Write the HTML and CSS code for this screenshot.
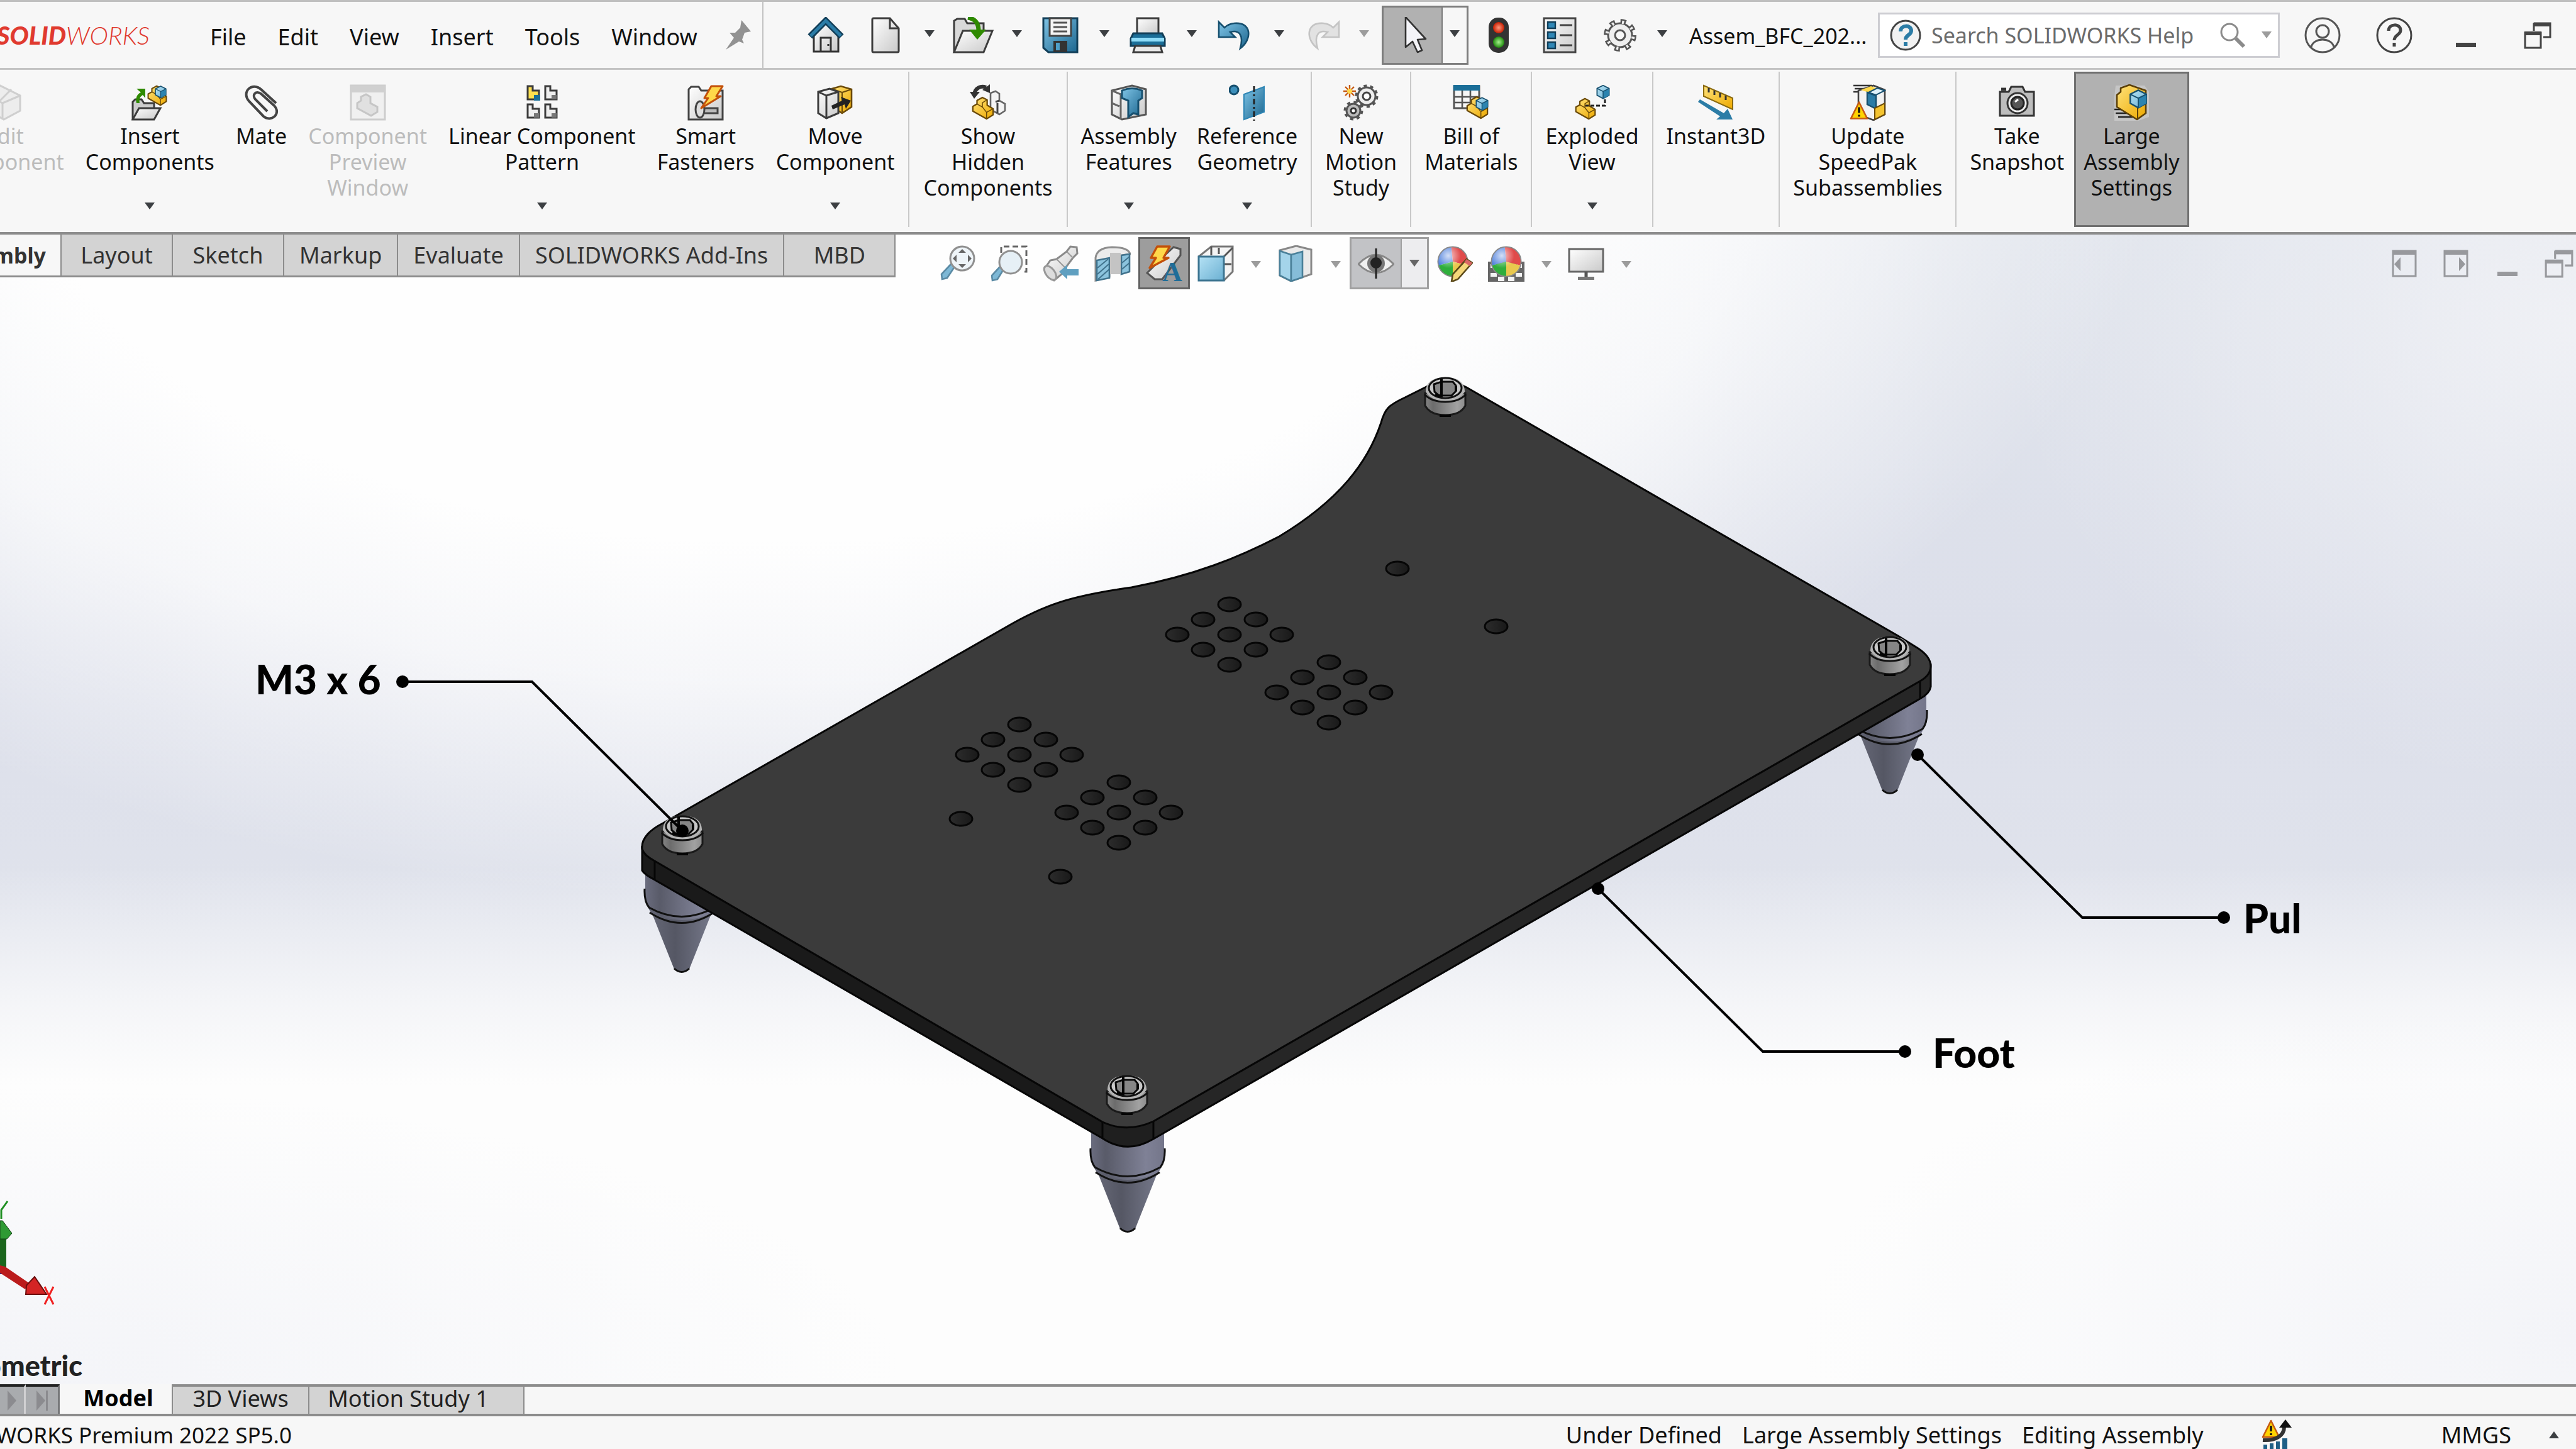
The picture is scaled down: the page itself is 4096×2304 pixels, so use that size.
FILE: index.html
```html
<!DOCTYPE html>
<html lang="en">
<head>
<meta charset="utf-8">
<title>SOLIDWORKS - Assembly</title>
<link rel="stylesheet" href="styles.css">
</head>
<body>
<svg class="defs" width="0" height="0" aria-hidden="true">
  <defs>
    <linearGradient id="gGray" x1="0" y1="0" x2="1" y2="1"><stop offset="0" stop-color="#ffffff"/><stop offset="1" stop-color="#c9c9c9"/></linearGradient>
    <linearGradient id="gBlue" x1="0" y1="0" x2="1" y2="1"><stop offset="0" stop-color="#7fc4e6"/><stop offset="1" stop-color="#1c668f"/></linearGradient>
    <linearGradient id="gSky" x1="0" y1="0" x2="1" y2="1"><stop offset="0" stop-color="#b5e2f5"/><stop offset="1" stop-color="#6bb0d2"/></linearGradient>
    <linearGradient id="gGold" x1="0" y1="0" x2="1" y2="1"><stop offset="0" stop-color="#ffe27a"/><stop offset="1" stop-color="#eda900"/></linearGradient>
    <linearGradient id="gFoot" x1="0" x2="1"><stop offset="0" stop-color="#6a6c7e"/><stop offset=".2" stop-color="#595b69"/><stop offset=".75" stop-color="#7f8196"/><stop offset="1" stop-color="#74768a"/></linearGradient>
    <linearGradient id="gCone" x1="0" x2="1"><stop offset="0" stop-color="#666877"/><stop offset=".4" stop-color="#555764"/><stop offset="1" stop-color="#777a8c"/></linearGradient>
    <linearGradient id="gScrew" x1="0" x2="1"><stop offset="0" stop-color="#858585"/><stop offset=".2" stop-color="#6c6c6c"/><stop offset=".8" stop-color="#a2a2a2"/><stop offset="1" stop-color="#8a8a8a"/></linearGradient>
    <linearGradient id="gHole" x1="0" x2="1"><stop offset="0" stop-color="#2c2c2c"/><stop offset="1" stop-color="#191919"/></linearGradient>
    <radialGradient id="gRed" cx=".5" cy=".5" r=".5"><stop offset="0" stop-color="#ff9a80"/><stop offset="1" stop-color="#c81e00"/></radialGradient>
    <radialGradient id="gGreen" cx=".5" cy=".5" r=".5"><stop offset="0" stop-color="#a6f08e"/><stop offset="1" stop-color="#1f8a0c"/></radialGradient>
    <radialGradient id="gShine" cx=".35" cy=".3" r=".7"><stop offset="0" stop-color="#fff" stop-opacity=".75"/><stop offset=".6" stop-color="#fff" stop-opacity="0"/></radialGradient>
    <symbol id="part" viewBox="0 0 40 40">
      <path d="M3 17 10 13V7L19 2 27 6V15L37 21V31L26 38 3 25Z" fill="url(#gGold)" stroke="#6b4a08" stroke-width="2.4" stroke-linejoin="round"/>
      <path d="M10 13 19 18V11L27 6M19 18 26 27V38M26 27 37 21" fill="none" stroke="#6b4a08" stroke-width="1.6"/>
    </symbol>
    <symbol id="cube" viewBox="0 0 40 40">
      <path d="M4 11 20 3 36 11V29L20 38 4 29Z" fill="url(#gSky)" stroke="#17506f" stroke-width="3" stroke-linejoin="round"/>
      <path d="M20 19 36 11V29L20 38Z" fill="#2c84b0"/>
      <path d="M4 11 20 19 36 11M20 19V38" fill="none" stroke="#17506f" stroke-width="2.4"/>
    </symbol>
    <symbol id="ball" viewBox="0 0 44 44">
      <path d="M22 22 20 2A20 20 0 0 0 3 27Z" fill="#4f80dc"/>
      <path d="M22 22 20 2A20 20 0 0 1 41 27Z" fill="#e04a4a"/>
      <path d="M22 22 3 27A20 20 0 0 0 22 42Z" fill="#2fae3c"/>
      <path d="M22 22 41 27A20 20 0 0 1 22 42Z" fill="#e9c84e"/>
      <circle cx="22" cy="22" r="20" fill="url(#gShine)" stroke="#888" stroke-width="1.5"/>
    </symbol>
    <symbol id="restore" viewBox="0 0 46 46">
      <path d="M17 4H43V26H32M17 4V16" fill="none" stroke="currentColor" stroke-width="3"/><path d="M16 3H44V9H16Z" fill="currentColor"/>
      <path d="M3 19H28V43H3Z" fill="none" stroke="currentColor" stroke-width="3"/><path d="M2 17H29V23H2Z" fill="currentColor"/>
    </symbol>
    <symbol id="warn" viewBox="0 0 30 30">
      <path d="M15 2 28 28H2Z" fill="#ffd400" stroke="#c65a12" stroke-width="2.6" stroke-linejoin="round"/><path d="M15 10V19M15 22V25" stroke="#111" stroke-width="3.4"/>
    </symbol>
  </defs>
</svg>

<div class="app">
  <header class="titlebar">
    <div class="brand"><span><b>SOLID</b>WORKS</span></div>
    <nav class="menus">
      <button>File</button><button>Edit</button><button>View</button><button>Insert</button><button>Tools</button><button>Window</button>
      <button class="pin" aria-label="Keep menu visible"><svg width="42" height="48" viewBox="0 0 42 48"><path d="M26 0 41 18 31 20 27 31 30 37 22 34 1 47 14 28 7 20 16 20 24 12Z" fill="#929292"/></svg></button>
    </nav>
    <div class="quick">
      <button class="q home" aria-label="Home"><svg class="i" viewBox="0 0 58 58"><path d="M10 30 29 10 49 30V55H10Z" fill="url(#gGray)" stroke="#333" stroke-width="3"/><path d="M21 55V33H37V55M33 43V46" fill="none" stroke="#333" stroke-width="3"/><path d="M4 31 29 6 54 31" fill="none" stroke="#123f59" stroke-width="10"/><path d="M5 30 29 6 53 30" fill="none" stroke="#2b7ca6" stroke-width="5"/></svg></button>
      <button class="q" aria-label="New"><svg class="i" viewBox="0 0 58 58"><path d="M8 4Q8 2 10 2H36L50 18V54Q50 56 48 56H10Q8 56 8 54Z" fill="url(#gGray)" stroke="#3c3c3c" stroke-width="3"/><path d="M36 2V18H50" fill="none" stroke="#3c3c3c" stroke-width="3"/></svg></button><button class="c" aria-label="New options"><i></i></button>
      <button class="q" aria-label="Open"><svg class="i wide" viewBox="0 0 66 58"><path d="M3 56V6L8 3H20L24 10H50V22" fill="#d9d9d9" stroke="#3c3c3c" stroke-width="3"/><path d="M3 56 17 22H64L50 56Z" fill="url(#gGray)" stroke="#3c3c3c" stroke-width="3"/><path d="M25 1C37 3 42 10 42 22" fill="none" stroke="#2f8a00" stroke-width="7"/><path d="M27 20H54L40 36Z" fill="#2f8a00"/></svg></button><button class="c" aria-label="Open options"><i></i></button>
      <button class="q" aria-label="Save"><svg class="i" viewBox="0 0 58 58"><path d="M2 2H56V56H10L2 49Z" fill="url(#gBlue)" stroke="#123f59" stroke-width="3"/><path d="M12 2H46V30H12Z" fill="#f4f4f4" stroke="#444" stroke-width="3"/><path d="M18 9H40M18 16H40M18 23H40" stroke="#555" stroke-width="3"/><path d="M18 38H40V56H18Z" fill="#333"/><path d="M22 41H28V53H22Z" fill="#4e9fc9"/></svg></button><button class="c" aria-label="Save options"><i></i></button>
      <button class="q" aria-label="Print"><svg class="i" viewBox="0 0 58 58"><path d="M12 2H46V28H12Z" fill="url(#gGray)" stroke="#3c3c3c" stroke-width="3"/><path d="M6 26H52L56 34V46H2V34Z" fill="#1a6e98" stroke="#123f59" stroke-width="3"/><path d="M3 33H55V39H3Z" fill="#8fdcf8"/><path d="M9 46H49L52 56H6Z" fill="#e8e8e8" stroke="#3c3c3c" stroke-width="3"/></svg></button><button class="c" aria-label="Print options"><i></i></button>
      <button class="q" aria-label="Undo"><svg class="i" viewBox="0 0 58 58"><path d="M3 8V32H29L21 24C35 20 43 28 37 50C56 36 56 8 28 10Q18 11 12 17Z" fill="url(#gBlue)" stroke="#17506f" stroke-width="2.6"/></svg></button><button class="c" aria-label="Undo options"><i></i></button>
      <button class="q" aria-label="Redo" disabled><svg class="i" viewBox="0 0 58 58"><path d="M55 8V32H29L37 24C23 20 15 28 21 50C2 36 2 8 30 10Q40 11 46 17Z" fill="#e2e2e2" stroke="#c4c4c4" stroke-width="2.6"/></svg></button><button class="c redo pale" aria-label="Redo options" disabled><i></i></button>
      <div class="split">
        <button class="sel" aria-label="Select"><svg class="i" viewBox="0 0 58 58"><path d="M18 0V48L29 39 37 56 44 53 37 36 50 35Z" fill="#f4f4f8" stroke="#333" stroke-width="2.6" stroke-linejoin="round"/></svg></button><button class="selc" aria-label="Select options"><i></i></button>
      </div>
      <button class="q light" aria-label="Rebuild"><svg class="i" viewBox="0 0 58 58"><rect x="13" y="1" width="32" height="56" rx="15" fill="#333"/><circle cx="29" cy="17" r="9" fill="url(#gRed)"/><circle cx="29" cy="40" r="9" fill="url(#gGreen)"/></svg></button>
      <button class="q list" aria-label="File properties"><svg class="i" viewBox="0 0 58 58"><path d="M4 2H54V56H4Z" fill="url(#gGray)" stroke="#444" stroke-width="3"/><path d="M10 8H22V18H10ZM10 24H22V34H10ZM10 40H22V50H10Z" fill="#2f86b5" stroke="#123f59" stroke-width="2.4"/><path d="M29 13H49M29 29H49M29 45H49" stroke="#444" stroke-width="3"/></svg></button>
      <button class="q gear" aria-label="Options"><svg class="i" viewBox="0 0 58 58"><circle cx="29" cy="29" r="21" fill="none" stroke="#555" stroke-width="10" stroke-dasharray="8.2 8.3"/><circle cx="29" cy="29" r="19" fill="#efefef" stroke="#555" stroke-width="3"/><circle cx="29" cy="29" r="21" fill="none" stroke="#efefef" stroke-width="5" stroke-dasharray="3.2 13.3" stroke-dashoffset="-2.5"/><circle cx="29" cy="29" r="8" fill="#f7f7f7" stroke="#555" stroke-width="3"/></svg></button><button class="c narrow" aria-label="Options list"><i></i></button>
    </div>
    <span class="doc">Assem_BFC_202...</span>
    <label class="search">
      <svg class="ihelp" viewBox="0 0 52 52"><circle cx="26" cy="26" r="23" fill="#f2f2f2" stroke="#444" stroke-width="3"/><path d="M18 20C18 9 35 9 35 19C35 26 26 25 26 33M26 37V43" fill="none" stroke="#2b7ca6" stroke-width="6"/></svg>
      <input type="search" placeholder="Search SOLIDWORKS Help" aria-label="Search SOLIDWORKS Help">
      <svg class="imag" viewBox="0 0 42 42"><circle cx="16" cy="16" r="13" fill="none" stroke="#8b8b8b" stroke-width="3"/><path d="M26 26 39 39" stroke="#8b8b8b" stroke-width="6"/></svg>
      <i class="car pale"></i>
    </label>
    <div class="wins">
      <button aria-label="Account"><svg class="i" viewBox="0 0 58 58"><circle cx="29" cy="29" r="27" fill="none" stroke="#555" stroke-width="3"/><circle cx="29" cy="23" r="10" fill="none" stroke="#555" stroke-width="3"/><path d="M11 48C14 32 44 32 47 48" fill="none" stroke="#555" stroke-width="3"/></svg></button>
      <button aria-label="Help"><svg class="i" viewBox="0 0 58 58"><circle cx="29" cy="29" r="27" fill="none" stroke="#444" stroke-width="3"/><path d="M20 22C20 10 39 10 39 21C39 29 29 28 29 37M29 41V47" fill="none" stroke="#444" stroke-width="5"/></svg></button>
      <button aria-label="Minimize"><svg class="i" viewBox="0 0 58 58"><path d="M13 41H45V48H13Z" fill="#444"/></svg></button>
      <button class="dark" aria-label="Restore"><svg width="46" height="46"><use href="#restore"/></svg></button>
    </div>
  </header>

  <section class="ribbon">
    <button class="r first" disabled><svg class="i" viewBox="0 0 58 58"><path d="M0 16 22 2 54 18V42L28 56 0 40Z" fill="#ededed" stroke="#cfcfcf" stroke-width="3"/><path d="M0 16 26 30 54 18M26 30V54M8 40 40 8" fill="none" stroke="#cfcfcf" stroke-width="3"/></svg><span>Edit<br>Component</span></button>
    <button class="r"><svg class="i" viewBox="0 0 58 58"><path d="M2 56V28L6 24H16L20 30H36V38" fill="#ccc" stroke="#3c3c3c" stroke-width="3"/><path d="M2 56 12 38H46L36 56Z" fill="url(#gGray)" stroke="#3c3c3c" stroke-width="3"/><path d="M8 30C6 22 9 15 15 13L8 7H22V22L18 17C13 20 12 24 13 30Z" fill="#2f8a00"/><use href="#part" x="24" y="0" width="34" height="36"/><use href="#cube" x="36" y="1" width="21" height="22"/></svg><span>Insert<br>Components</span><i class="car"></i></button>
    <button class="r"><svg class="i" viewBox="0 0 58 58"><path d="M52 30 29 9C14-5-4 12 9 27L32 51C44 61 61 47 49 34L28 15C20 9 13 17 19 24L38 43" fill="none" stroke="#444" stroke-width="4"/></svg><span>Mate</span></button>
    <button class="r" disabled><svg class="i" viewBox="0 0 58 58"><path d="M2 2H56V56H2Z" fill="#f0f0f0" stroke="#cdcdcd" stroke-width="3"/><path d="M2 2H56V13H2Z" fill="#d0d0d0"/><path d="M12 30 18 26V20L26 16 33 20V30L44 36V44L34 50 12 38Z" fill="#e0e0e0" stroke="#c6c6c6" stroke-width="3"/></svg><span>Component<br>Preview<br>Window</span></button>
    <button class="r"><svg class="i" viewBox="0 0 58 58"><g fill="#eee" stroke="#3c3c3c" stroke-width="3"><path d="M6 3H14V10H24V24H6Z" fill="#ffdf4f"/><path d="M34 3H42V10H52V24H34ZM6 32H14V39H24V53H6ZM34 32H42V39H52V53H34Z"/></g><path d="M16 17H26V26H16Z" fill="#1a6e98"/><path d="M44 17H52V24H44ZM16 46H24V53H16ZM44 46H52V53H44Z" fill="#777"/></svg><span>Linear Component<br>Pattern</span><i class="car"></i></button>
    <button class="r"><svg class="i" viewBox="0 0 58 58"><path d="M2 8 6 4H18L22 10H56V56H2Z" fill="url(#gGray)" stroke="#444" stroke-width="3"/><path d="M20 38H48V46H20Z" fill="#bbb" stroke="#444" stroke-width="3"/><ellipse cx="20" cy="40" rx="7" ry="13" fill="#ddd" stroke="#444" stroke-width="3"/><path d="M38 3H56L46 19H53L22 38 33 22H27Z" fill="#ffd84a" stroke="#c3500a" stroke-width="3" stroke-linejoin="round"/></svg><span>Smart<br>Fasteners</span></button>
    <button class="r"><svg class="i" viewBox="0 0 58 58"><path d="M24 7 38 3 55 8V36L40 46 24 36Z" fill="url(#gGold)" stroke="#6b4a08" stroke-width="2.6"/><path d="M26 8 40 13V44M40 13 55 8" fill="none" stroke="#6b4a08" stroke-width="2"/><path d="M2 12 20 7 34 12V46L15 54 2 46Z" fill="url(#gGray)" stroke="#3c3c3c" stroke-width="3"/><path d="M2 12 15 18 34 12M15 18V54" fill="none" stroke="#3c3c3c" stroke-width="3"/><path d="M23 34 40 26 38 20 54 26 46 39 44 32 25 40Z" fill="#222"/></svg><span>Move<br>Component</span><i class="car"></i></button>
    <hr>
    <button class="r"><svg class="i" viewBox="0 0 58 58"><path d="M33 14 41 11 47 15V26L56 31V42L47 48 33 40Z" fill="#f4f4f4" stroke="#666" stroke-width="2.6"/><path d="M41 28 47 26M44 30V46" stroke="#444" stroke-width="3"/><use href="#part" x="2" y="18" width="38" height="40"/><path d="M7 16C9 5 18 2 26 5" fill="none" stroke="#333" stroke-width="6"/><path d="M32 0V14L20 9ZM0 12H16L7 23Z" fill="#333"/></svg><span>Show<br>Hidden<br>Components</span></button>
    <hr>
    <button class="r tight"><svg class="i" viewBox="0 0 58 58"><path d="M2 10 34 2 56 8V48L18 56 2 48Z" fill="url(#gGray)" stroke="#555" stroke-width="3"/><path d="M2 10 16 16 34 12M16 16V56M2 30 14 35" fill="none" stroke="#666" stroke-width="3"/><path d="M18 10Q34 3 50 10V22L44 26V48L36 46 28 52V26L18 22Z" fill="url(#gBlue)" stroke="#17506f" stroke-width="3"/></svg><span>Assembly<br>Features</span><i class="car"></i></button>
    <button class="r tight"><svg class="i" viewBox="0 0 58 58"><circle cx="8" cy="9" r="7" fill="#3c8fbb" stroke="#17506f" stroke-width="3"/><path d="M24 16 56 4V44L24 56Z" fill="url(#gBlue)" stroke="#2f86b5" stroke-width="2"/><path d="M40 3V58" stroke="#222" stroke-width="3" stroke-dasharray="9 4 3 4"/></svg><span>Reference<br>Geometry</span><i class="car"></i></button>
    <hr>
    <button class="r tight"><svg class="i" viewBox="0 0 58 58"><circle cx="38" cy="19" r="16" fill="none" stroke="#555" stroke-width="5" stroke-dasharray="5 5.05"/><circle cx="38" cy="19" r="14" fill="#eee" stroke="#555" stroke-width="3"/><circle cx="38" cy="19" r="6" fill="#fff" stroke="#444" stroke-width="3"/><circle cx="17" cy="42" r="13" fill="none" stroke="#555" stroke-width="5" stroke-dasharray="5 5.2"/><circle cx="17" cy="42" r="11" fill="#bbb" stroke="#555" stroke-width="3"/><circle cx="17" cy="42" r="4" fill="#fff" stroke="#333" stroke-width="3"/><path d="M11 1V21M1 11H21M4 4 18 18M18 4 4 18" stroke="#c65a12" stroke-width="2.4"/><circle cx="11" cy="11" r="4" fill="#ffd84a"/></svg><span>New<br>Motion<br>Study</span></button>
    <hr>
    <button class="r tight"><svg class="i" viewBox="0 0 58 58"><path d="M2 3H42V38H2Z" fill="#f6f6f6" stroke="#555" stroke-width="3"/><path d="M15 10V38M28 10V38M2 20H42M2 29H42" stroke="#555" stroke-width="2.6"/><path d="M1 1H43V10H1Z" fill="#1a6e98"/><use href="#part" x="20" y="16" width="38" height="42"/><use href="#cube" x="35" y="18" width="23" height="26"/></svg><span>Bill of<br>Materials</span></button>
    <hr>
    <button class="r tight"><svg class="i" viewBox="0 0 58 58"><use href="#part" x="0" y="20" width="36" height="38"/><use href="#cube" x="34" y="0" width="24" height="24"/><path d="M49 24V34H18" fill="none" stroke="#222" stroke-width="3" stroke-dasharray="6 3"/></svg><span>Exploded<br>View</span><i class="car"></i></button>
    <hr>
    <button class="r tight"><svg class="i" viewBox="0 0 58 58"><path d="M10 2 56 22V40L10 19Z" fill="url(#gGold)" stroke="#8a6a10" stroke-width="2"/><path d="M18 6V13M27 10V17M36 14V21M45 18V25" stroke="#333" stroke-width="3"/><path d="M1 28 4 24 42 46 48 39 56 56H30L36 51Z" fill="#2b7ca6"/></svg><span>Instant3D</span></button>
    <hr>
    <button class="r tight"><svg class="i" viewBox="0 0 58 58"><path d="M6 2H36M8 7H28M6 12H24" stroke="#333" stroke-width="2.6"/><path d="M14 10 38 2 56 9V48L38 57 14 48Z" fill="#f2f2f2" stroke="#444" stroke-width="2.6"/><path d="M18 9 34 3 44 7 30 13Z" fill="#ffd84a"/><path d="M30 13 44 6 56 10 42 17Z" fill="#dff1fa" stroke="#17506f" stroke-width="2"/><path d="M28 13 42 18V39L28 32Z" fill="#2b7ca6" stroke="#17506f" stroke-width="2.4"/><path d="M40 38 56 30V48L40 56Z" fill="#f4c430" stroke="#6b4a08" stroke-width="2"/><use href="#warn" x="0" y="26" width="30" height="31"/></svg><span>Update<br>SpeedPak<br>Subassemblies</span></button>
    <hr>
    <button class="r tight"><svg class="i" viewBox="0 0 58 58"><path d="M2 12H16L20 4H38L42 12H56V50H2Z" fill="#bdbdbd" stroke="#333" stroke-width="3"/><circle cx="30" cy="30" r="16" fill="#eee" stroke="#333" stroke-width="3"/><circle cx="30" cy="30" r="10" fill="#555" stroke="#222" stroke-width="3"/><path d="M26 28 31 24" stroke="#fff" stroke-width="3"/><path d="M4 8H12" stroke="#333" stroke-width="5"/></svg><span>Take<br>Snapshot</span></button>
    <button class="r on" aria-pressed="true"><svg class="i" viewBox="0 0 58 58"><path d="M4 2H50L57 12V52L40 58H2V20Z" fill="#c6c6c6"/><path d="M2 40H24M4 46H30M8 52H36" stroke="#222" stroke-width="2.6"/><path d="M6 17 12 12V6L26 1 52 10V46L38 56 6 36Z" fill="url(#gGold)" stroke="#5c4008" stroke-width="2.6" stroke-linejoin="round"/><path d="M39 38V55" stroke="#5c4008" stroke-width="2"/><use href="#cube" x="24" y="6" width="32" height="34"/></svg><span>Large<br>Assembly<br>Settings</span></button>
  </section>

  <main class="view">
    <svg class="scene" viewBox="0 373 4096 1828" preserveAspectRatio="xMinYMin meet" role="img" aria-label="Assembly model">
      <defs>
        <g id="foot">
          <path d="M-51 128H51L12 226Q0 235-12 226Z" fill="url(#gCone)"/>
          <path d="M-58 20H58V112Q56 126 49 136Q0 160-49 136Q-56 126-58 112Z" fill="url(#gFoot)"/>
          <path d="M-59 98Q-60 118-52 128Q0 157 52 128Q60 118 59 98M-51 136Q0 169 51 136M-12 225Q0 236 12 225" fill="none" stroke="#111" stroke-width="3"/>
        </g>
        <g id="screw">
          <path d="M-32 8V28Q-24 43 0 43Q24 43 32 28V8Z" fill="url(#gScrew)" stroke="#1a1a1a" stroke-width="3"/>
          <path d="M-9 44H9" stroke="#050505" stroke-width="4"/>
          <path d="M-31 6C-31-4-26-17 0-17C26-17 31-4 31 6C24 16 14 21 0 21C-14 21-24 16-31 6Z" fill="#b4b4b4"/>
          <path d="M-33 10Q-22 22 0 22Q22 22 33 10" fill="none" stroke="#111" stroke-width="3"/>
          <ellipse rx="26" ry="16" fill="#c8c8c8" stroke="#111" stroke-width="3"/>
          <path d="M-18-6-6-10H12L17-4V5L10 12H-10L-17 6Z" fill="#868686" stroke="#0a0a0a" stroke-width="3"/>
          <path d="M-6-15V11M-16 11-4 13M17-3V5" stroke="#050505" stroke-width="4"/>
        </g>
        <ellipse id="hole" rx="18" ry="11" fill="url(#gHole)" stroke="#060606" stroke-width="3"/>
        <g id="grid">
          <use href="#hole" y="-48"/><use href="#hole" x="-42" y="-24"/><use href="#hole" x="42" y="-24"/><use href="#hole" x="-83"/><use href="#hole"/><use href="#hole" x="83"/><use href="#hole" x="-42" y="24"/><use href="#hole" x="42" y="24"/><use href="#hole" y="48"/>
        </g>
      </defs>
      <use href="#foot" x="1084" y="1315"/><use href="#foot" x="1793" y="1728"/><use href="#foot" x="3005" y="1031"/>
      <path d="M1021 1345V1384Q1024 1390 1041 1399L1753 1810Q1792 1836 1834 1811L1834 1783 1753 1784Z" fill="#1a1a1a"/>
      <path d="M1834 1783 3053 1083 3070 1055V1092Q3068 1103 3053 1111L1834 1811Z" fill="#262626"/>
      <path d="M1753 1784V1810Q1792 1836 1834 1811V1783Z" fill="#1f1f1f"/>
      <path d="M1021 1345V1384Q1024 1390 1041 1399L1753 1810Q1792 1836 1834 1811L3053 1111Q3068 1103 3070 1092V1055M1041 1369V1399M1753 1784V1810M1834 1783V1811M3053 1083V1111" fill="none" stroke="#060606" stroke-width="3"/>
      <path d="M1021 1350C1019 1332 1036 1318 1054 1309L1434 1092 1600 997C1660 962 1700 948 1799 934C1900 915 1970 886 2034 853C2130 795 2175 735 2196 672C2202 650 2208 644 2234 632L2266 616Q2298 598 2332 616L3018 1011 3050 1031C3076 1048 3076 1070 3053 1083L1834 1783Q1792 1802 1753 1784L1041 1369Q1024 1360 1021 1350Z" fill="#3b3b3b" stroke="#060606" stroke-width="3"/>
      <use href="#grid" x="1955" y="1009"/><use href="#grid" x="2113" y="1101"/><use href="#grid" x="1621" y="1200"/><use href="#grid" x="1779" y="1292"/>
      <use href="#hole" x="1528" y="1302"/><use href="#hole" x="1686" y="1394"/><use href="#hole" x="2222" y="904"/><use href="#hole" x="2379" y="996"/>
      <use href="#screw" x="2298" y="617"/><use href="#screw" x="3005" y="1029"/><use href="#screw" x="1792" y="1727"/><use href="#screw" x="1085" y="1314"/>
      <g fill="none" stroke="#000" stroke-width="4">
        <path d="M640 1084H846L1085 1321"/><path d="M3049 1200 3311 1459H3536"/><path d="M2541 1413 2803 1672H3029"/>
      </g>
      <circle cx="640" cy="1084" r="10"/><circle cx="1085" cy="1321" r="10"/><circle cx="3049" cy="1200" r="10"/><circle cx="3536" cy="1459" r="10"/><circle cx="2541" cy="1413" r="10"/><circle cx="3029" cy="1672" r="10"/>
      <g class="callout"><text x="406" y="1104">M3 x 6</text><text x="3567" y="1484">Pul</text><text x="3073" y="1698">Foot</text></g>
      <path d="M0 2012H9L5 2026H0Z" fill="#202a8c"/>
      <path d="M0 1968H10V2016H0Z" fill="#1b661d"/><path d="M0 1941H4L19 1961 11 1970H0Z" fill="#2f9a34" stroke="#123f14" stroke-width="1"/>
      <path d="M0 2012 8 2014 46 2040 40 2050 0 2024Z" fill="#bb1c1c"/><path d="M55 2030 74 2058H41L42 2044Z" fill="#d42424" stroke="#6a0f0f" stroke-width="2"/>
      <path d="M12 1910 2 1924V1938" fill="none" stroke="#1f8f22" stroke-width="3"/>
      <path d="M71 2046 85 2074M85 2046 71 2074" stroke="#f02020" stroke-width="3"/>
    </svg>
    <div class="over">
      <nav class="tabs">
        <button class="on"><span>Assembly</span></button><button>Layout</button><button>Sketch</button><button>Markup</button><button>Evaluate</button><button>SOLIDWORKS Add-Ins</button><button>MBD</button>
      </nav>
      <div class="heads">
        <button aria-label="Zoom to fit"><svg class="i" viewBox="0 0 58 58"><path d="M24 34 12 52 4 54 3 46 18 30" fill="#7db8d6" stroke="#5b8ba5" stroke-width="2.6"/><circle cx="36" cy="21" r="19" fill="#eef4f8" stroke="#909090" stroke-width="3"/><path d="M36 6 42 12H30ZM36 36 30 30H42ZM21 21 27 15V27ZM51 21 45 15V27Z" fill="#666"/></svg></button>
        <button aria-label="Zoom to area"><svg class="i" viewBox="0 0 58 58"><path d="M16 12V2H56V42H48" fill="none" stroke="#666" stroke-width="3" stroke-dasharray="9 5"/><path d="M20 38 10 54 2 56 1 48 14 34" fill="#7db8d6" stroke="#5b8ba5" stroke-width="2.6"/><circle cx="31" cy="27" r="18" fill="#e6f0f6" stroke="#909090" stroke-width="3"/></svg></button>
        <button aria-label="Previous view"><svg class="i" viewBox="0 0 58 58"><path d="M3 37 12 24 22 22 38 10 44 2 54 3 55 13 48 20 36 36 30 46 18 56 8 50Z" fill="url(#gGray)" stroke="#8a8a8a" stroke-width="3"/><path d="M22 22 36 36M38 10 48 20" stroke="#9a9a9a" stroke-width="2"/><ellipse cx="12" cy="44" rx="7" ry="13" transform="rotate(-38 12 44)" fill="#ddd" stroke="#999" stroke-width="3"/><path d="M26 42 39 31V38H57V48H39V54Z" fill="#5f9fc0"/></svg></button>
        <button aria-label="Section view"><svg class="i" viewBox="0 0 58 58"><path d="M2 20Q4 4 28 3Q54 3 57 14L44 16 24 24V50L2 56Z" fill="#ececec" stroke="#8d8d8d" stroke-width="3"/><path d="M4 24 24 20V52L4 56ZM43 16 56 14V42L43 46Z" fill="#8cc4de" stroke="#41738d" stroke-width="2.6"/><path d="M5 36 22 22M5 46 23 30M6 54 24 38M44 28 56 18M44 38 56 28" stroke="#41738d" stroke-width="2"/><path d="M25 12H42V46H25Z" fill="#c4c4c4"/></svg></button>
        <button class="dyn" aria-label="Dynamic annotation views" aria-pressed="true"><svg class="i" viewBox="0 0 58 58"><path d="M2 44 30 16 44 3 55 6V16L26 54H14Z" fill="url(#gGray)" stroke="#555" stroke-width="3"/><path d="M18 2H38L28 20H36L6 36 16 20H8Z" fill="#ffd84a" stroke="#c3500a" stroke-width="3.4" stroke-linejoin="round"/><text x="26" y="57" class="letter">A</text></svg></button>
        <button aria-label="View orientation"><svg class="i" viewBox="0 0 58 58"><path d="M2 18 22 2H56V42L42 56" fill="#f4f4f4" stroke="#777" stroke-width="3"/><path d="M22 2V16M42 18 56 4M34 4V14M42 30H54" stroke="#555" stroke-width="3"/><path d="M2 18H42V56H2Z" fill="url(#gSky)" stroke="#3d7591" stroke-width="3"/></svg></button><button class="c pale" aria-label="View orientation list"><i></i></button>
        <button aria-label="Display style"><svg class="i" viewBox="0 0 58 58"><path d="M4 8 30 1 54 7V46L22 57 4 48Z" fill="#eaeaea" stroke="#888" stroke-width="3"/><path d="M4 9 22 15V57L4 48Z" fill="#a4d4ea" stroke="#4a8099" stroke-width="2.6"/><path d="M22 15 40 10V51L22 57Z" fill="#86bdd8" stroke="#4a8099" stroke-width="2.6"/></svg></button><button class="c pale" aria-label="Display style list"><i></i></button>
        <button class="eye" aria-label="Hide or show items" aria-pressed="true"><svg class="i" viewBox="0 0 58 58"><path d="M1 30Q29 0 57 30Q29 58 1 30Z" fill="#f0f0f0" stroke="#888" stroke-width="3"/><circle cx="29" cy="29" r="14" fill="#777"/><circle cx="29" cy="28" r="9" fill="#222"/><path d="M29 5V53" stroke="#222" stroke-width="3"/></svg></button><button class="eyec" aria-label="Hide or show list"><i></i></button>
        <button aria-label="Edit appearance"><svg class="i" viewBox="0 0 58 58"><use href="#ball" x="0" y="0" width="52" height="52"/><path d="M48 22 57 28 34 54 24 58 26 46Z" fill="#f5d77a" stroke="#5c4a1a" stroke-width="2.6"/><path d="M48 22 57 28 53 33 44 27Z" fill="#d96666"/></svg></button>
        <button aria-label="Apply scene"><svg class="i" viewBox="0 0 58 58"><path d="M0 26H58V58H0Z" fill="#666"/><path d="M4 30H12V36H4ZM46 30H54V36H46ZM4 44H14V50H4ZM44 44H54V50H44ZM16 50H26V57H16ZM32 50H42V57H32Z" fill="#f3f3f3"/><use href="#ball" x="3" y="0" width="52" height="52"/></svg></button><button class="c pale" aria-label="Scene list"><i></i></button>
        <button aria-label="View settings"><svg class="i" viewBox="0 0 58 58"><path d="M2 6H56V42H2Z" fill="url(#gGray)" stroke="#666" stroke-width="3"/><path d="M29 42V50" stroke="#555" stroke-width="5"/><path d="M16 50H42V55H16Z" fill="#777"/></svg></button><button class="c pale" aria-label="View settings list"><i></i></button>
      </div>
      <div class="docwins">
        <button aria-label="Collapse left"><svg width="42" height="46" viewBox="0 0 42 46"><path d="M3 3H39V43H3Z" fill="none" stroke="currentColor" stroke-width="3"/><path d="M15 13V35L5 24ZM3 3V9H39V3Z" fill="currentColor"/></svg></button>
        <button aria-label="Collapse right"><svg width="42" height="46" viewBox="0 0 42 46"><path d="M3 3H39V43H3Z" fill="none" stroke="currentColor" stroke-width="3"/><path d="M26 13V35L36 24ZM3 3V9H39V3Z" fill="currentColor"/></svg></button>
        <button aria-label="Minimize document"><svg width="42" height="46" viewBox="0 0 42 46"><path d="M5 36H37V43H5Z" fill="currentColor"/></svg></button>
        <button aria-label="Restore document"><svg width="50" height="48"><use href="#restore"/></svg></button>
      </div>
    </div>
    <div class="orient"><span>*Isometric</span></div>
  </main>

  <nav class="sheets">
    <button class="nav1" aria-label="Next"><svg width="18" height="32" viewBox="0 0 18 32"><path d="M2 0 16 16 2 32Z" fill="#8b8b8f"/></svg></button><button class="nav2" aria-label="Last"><svg width="20" height="32" viewBox="0 0 20 32"><path d="M1 0 15 16 1 32ZM16 0H19V32H16Z" fill="#8b8b8f"/></svg></button>
    <button class="on">Model</button><button class="t">3D Views</button><button class="t last">Motion Study 1</button><div class="rest"></div>
  </nav>
  <footer class="status">
    <div class="product"><span>SOLIDWORKS Premium 2022 SP5.0</span></div>
    <div class="info"><span>Under Defined</span><span>Large Assembly Settings</span><span>Editing Assembly</span></div>
    <svg class="stat" viewBox="0 0 48 48"><use href="#warn" x="0" y="0" width="30" height="30"/><path d="M2 33C22 34 36 26 36 12" fill="none" stroke="#333" stroke-width="6"/><path d="M28 13H48L38 0Z" fill="#111"/><path d="M3 40H9V48H3ZM13 38H19V48H13ZM23 35H29V48H23ZM33 30H41V48H33Z" fill="#1f5f86"/></svg>
    <button class="units">MMGS<i></i></button>
  </footer>
</div>
</body>
</html>
```
FILE: styles.css
```css
* { box-sizing: border-box; }
html, body { height: 100%; margin: 0; }
body { background: #f7f7f7; overflow: hidden; font-family: "Noto Sans", "Open Sans", sans-serif; font-size: 34px; color: #111; }
button { font: inherit; color: inherit; background: none; border: 0; padding: 0; margin: 0; display: flex; align-items: center; justify-content: center; flex: none; white-space: nowrap; }
svg { display: block; flex: none; }
.defs { position: absolute; }
.i { width: 58px; height: 58px; }
.wide { width: 66px; }
.app { min-height: 100vh; display: flex; flex-direction: column; overflow: hidden; }

/* small down-pointing triangle */
.car, .c i, .selc i, .eyec i { display: block; width: 0; height: 0; border: 8px solid transparent; border-top: 11px solid #3c3f42; border-bottom: 0; }
.pale, .c.pale i { border-top-color: #9c9c9c; }

/* title bar */
.titlebar { display: flex; align-items: center; height: 111px; flex: none; border-top: 3px solid #bfbfbf; border-bottom: 3px solid #c3c3c3; padding-right: 4px; }
.brand { width: 238px; display: flex; justify-content: flex-end; overflow: hidden; font-family: Lato, sans-serif; font-style: italic; font-weight: 300; font-size: 40px; color: #e03a2f; }
.brand b { font-weight: 900; }
.menus { display: flex; gap: 50px; align-self: stretch; align-items: center; padding-left: 96px; width: 976px; border-right: 2px solid #c3c3c3; flex: none; font-size: 36px; }
.menus button { padding-top: 6px; }
.menus .pin { margin-left: -6px; padding-top: 0; }
.quick { display: flex; align-items: center; align-self: stretch; padding-left: 42px; }
.q { width: 76px; }
.home { width: 114px; }
.c { width: 63px; padding-bottom: 4px; }
.redo { width: 56px; }
.split { display: flex; height: 94px; width: 138px; border: 3px solid #7d7d7d; background: #f7f7f7; flex: none; }
.sel { width: 94px; background: #b1b1b1; border-right: 2px solid #7d7d7d; }
.selc { flex: 1; padding-bottom: 4px; }
.light { width: 96px; }
.list { width: 98px; }
.gear { width: 94px; }
.narrow { width: 40px; }
.doc { padding: 2px 0 0 23px; white-space: nowrap; }
.search { margin-left: auto; width: 639px; height: 72px; flex: none; display: flex; align-items: center; background: #fff; border: 3px solid #cdcdd2; padding: 0 10px 0 15px; }
.search input { flex: 1; min-width: 0; height: 60px; border: 0; padding: 0 0 0 15px; background: none; font: inherit; color: #666; }
.search input::placeholder { color: #6b6b6b; opacity: 1; }
.ihelp { width: 52px; height: 52px; }
.imag { width: 42px; height: 42px; margin-right: 25px; }
.wins { display: flex; margin-left: 11px; flex: none; color: #444; }
.wins button { width: 114px; }

/* ribbon */
.ribbon { display: flex; flex: none; height: 262px; padding: 3px 0 8px; border-bottom: 4px solid #8c8c8c; }
.ribbon hr { width: 2px; margin: 0 5px; border: 0; background: #c9c9c9; flex: none; }
.r { flex-direction: column; justify-content: flex-start; height: 247px; padding: 20px 17px 28px; line-height: 41px; text-align: center; }
.r span { margin-top: 4px; }
.r .car { margin-top: auto; }
.r:disabled { color: #bcbcbc; }
.first { margin-left: -104px; }
.tight { padding-left: 16px; padding-right: 16px; }
.r.on { background: #b1b1b1; border: 3px solid #6f6f6f; padding: 17px 12px; }

/* graphics area */
.view { position: relative; flex: 1; display: grid; min-height: 0; overflow: hidden;
  background:
    radial-gradient(ellipse 22% 40% at 100% 8%, rgba(241,242,246,.9), rgba(241,242,246,0)),
    radial-gradient(ellipse 35% 26% at 0% 100%, #f3f4f8, rgba(243,244,248,0)),
    radial-gradient(ellipse 30% 30% at 100% 96%, #f3f4f8, rgba(243,244,248,0)),
    linear-gradient(to bottom, rgba(253,253,253,0) 55%, rgba(253,253,253,.3) 60%, rgba(253,253,253,.66) 66%, #fdfdfd 74%),
    radial-gradient(ellipse 54% 68% at 30% -10%, #fefefe 54%, rgba(254,254,254,.75) 72%, rgba(254,254,254,.3) 88%, rgba(254,254,254,0) 100%),
    linear-gradient(to bottom, #e0e4ec 0%, #dcdfea 35%, #e0e3ec 60%); }
.scene { grid-area: 1 / 1; width: 100%; height: 100%; }
.callout { font-family: Lato, sans-serif; font-weight: 900; font-size: 64px; fill: #000; }
.letter { font-family: "Liberation Serif", serif; font-weight: 700; font-size: 44px; fill: #1f6d98; }
.over { grid-area: 1 / 1; align-self: start; display: flex; align-items: flex-start; min-width: 0; z-index: 1; }
.tabs { display: flex; flex: none; height: 68px; border-bottom: 3px solid #8c8c8c; font-size: 36px; color: #333; }
.tabs button { min-width: 177px; padding: 0 24px; background: #d3d3d3; border-right: 2px solid #8c8c8c; }
.tabs .on { min-width: 0; width: 98px; padding: 0 23px 0 0; background: #f7f7f7; justify-content: flex-end; overflow: hidden; font-weight: 700; font-size: 34px; }
.heads { display: flex; height: 83px; margin: 4px 0 0 58px; }
.heads button { width: 82px; }
.heads .c { width: 45px; padding: 3px 0 0; }
.heads .dyn { background: #9d9d9d; border: 3px solid #626262; }
.heads .eye { width: 83px; background: #c2c3c6; border: 3px solid #a0a0a0; border-right-width: 2px; }
.heads .eyec { width: 43px; border: 3px solid #a0a0a0; border-left: 0; background: #ededef; }
.heads .eyec i { border-top-color: #666; }
.docwins { display: flex; height: 83px; margin: 4px -14px 0 auto; color: #98999d; }
.docwins button { width: 82px; }
.orient { grid-area: 1 / 1; align-self: end; width: 131px; display: flex; justify-content: flex-end; font-family: Lato, sans-serif; font-weight: 900; font-size: 45px; line-height: 50px; padding-bottom: 5px; color: #222; z-index: 1; }

/* document sheets */
.sheets { display: flex; flex: none; height: 51px; border-bottom: 4px solid #8c8c8c; font-size: 36px; }
.sheets button { color: #222; padding-bottom: 4px; }
.sheets .nav1, .sheets .nav2 { background: #a9abae; border-top: 4px solid #222; border-right: 3px solid #d0d0d2; padding-bottom: 0; }
.sheets .nav1 { width: 41px; }
.sheets .nav2 { width: 54px; border-right: 3px solid #77787a; }
.sheets .on { width: 178px; padding-left: 8px; font-weight: 700; color: #000; }
.sheets .t { width: 217px; background: #d3d3d3; border-top: 4px solid #8c8c8c; border-left: 2px solid #8c8c8c; padding-bottom: 6px; }
.sheets .last { width: 344px; border-right: 2px solid #8c8c8c; padding-right: 26px; }
.rest { flex: 1; border-top: 4px solid #8c8c8c; }

/* status bar */
.status { display: flex; align-items: center; flex: none; height: 52px; padding-top: 6px; white-space: nowrap; font-size: 36px; }
.product { width: 464px; display: flex; justify-content: flex-end; font-size: 35px; }
.info { display: flex; gap: 32px; margin-left: auto; }
.stat { width: 48px; height: 48px; margin-left: 92px; }
.units { margin: 0 27px 0 238px; gap: 60px; }
.units i { border: 8px solid transparent; border-bottom: 11px solid #3c3f42; border-top: 0; }
```
